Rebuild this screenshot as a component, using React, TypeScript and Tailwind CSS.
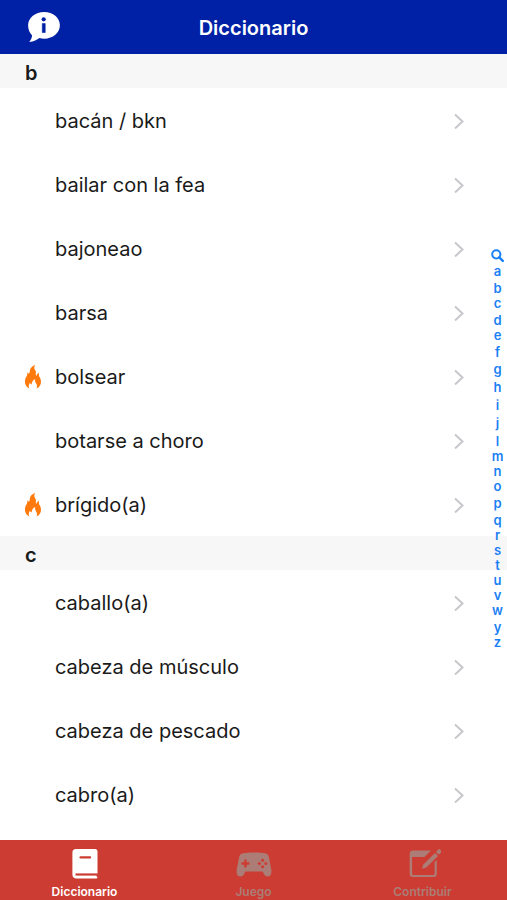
import { useRef, useState } from 'react'
import clsx from 'clsx'

interface Entry {
  word: string
  hot?: boolean
}

interface Section {
  letter: string
  entries: Entry[]
}

const SECTIONS: Section[] = [
  {
    letter: 'b',
    entries: [
      { word: 'bacán / bkn' },
      { word: 'bailar con la fea' },
      { word: 'bajoneao' },
      { word: 'barsa' },
      { word: 'bolsear', hot: true },
      { word: 'botarse a choro' },
      { word: 'brígido(a)', hot: true },
    ],
  },
  {
    letter: 'c',
    entries: [
      { word: 'caballo(a)' },
      { word: 'cabeza de músculo' },
      { word: 'cabeza de pescado' },
      { word: 'cabro(a)' },
    ],
  },
]

const INDEX = 'abcdefghijlmnopqrstuvwyz'.split('')

function slotHeight(letter: string) {
  if ('hijl'.includes(letter)) return 'h-[18px]'
  if ('bdfgpqy'.includes(letter)) return 'h-[17px]'
  return 'h-[15px]'
}

function InfoBubble() {
  return (
    <svg viewBox="0 0 34 32" className="h-8 w-[34px]" aria-hidden="true">
      <path
        d="M17.2 1C26 1 32.900 6.800 32.900 14.300S26 27.700 17.200 27.700c-1.700 0-3.300-.2-4.800-.6-2.300 1.900-5.500 3.500-10.200 3.900 1.700-1.900 2.600-4 2.900-6.500C2.600 22 1.100 18.300 1.100 14.300 1.100 6.800 8.400 1 17.200 1z"
        fill="#fff"
      />
      <circle cx="16.700" cy="8.300" r="2.100" fill="#0021a5" />
      <path d="M15.300 12.600h2.900v8.900h-2.900z" fill="#0021a5" stroke="#0021a5" strokeWidth=".6" strokeLinejoin="round" />
    </svg>
  )
}

function Flame() {
  return (
    <svg viewBox="0 0 18 26" className="h-[26px] w-[18px]" fill="#ff7a0c" aria-hidden="true">
      <path d="M11.300 1C7.600 2.100 5.600 4.600 5.700 8c0 .8-.2 1.300-.8 1.400-.7 0-1-.6-1.800-1.100.5 1.600.3 2.600-.5 4C1.500 14.200.9 15.700.9 17.500c0 3 1.500 5.500 4.300 7-.8-2.400-.5-4.200.8-5.800.4 1 .9 1.500 1.700 1.600.2-2.500 1.200-4.300 3.500-5.300-.4 1.900 0 3.100.9 4.400 1.200 1.700 1.300 3.400.4 5.200 3-1.300 4.500-3.800 4.500-6.900 0-1.900-.6-3.300-1.500-4.800-.8-1.500-.9-2.700-.3-4.200-1.600.5-2.500 1.500-2.600 3.100-.8-.4-1-1.200-.7-2.400.3-1.400-.1-2.300-.9-3.400-1.100-1.500-1-3.200.3-5z" />
    </svg>
  )
}

function Chevron() {
  return (
    <svg viewBox="0 0 10 16" className="h-4 w-[10px]" fill="none" stroke="#c7c7cc" strokeWidth="2" aria-hidden="true">
      <path d="M1 1.500l7.500 7L1 15.500" />
    </svg>
  )
}

function SearchIcon() {
  return (
    <svg viewBox="0 0 13 13" className="size-[13px]" fill="none" stroke="currentColor" aria-hidden="true">
      <circle cx="5.300" cy="5.300" r="4.100" strokeWidth="2" />
      <path d="M8.300 8.300l3.500 3.500" strokeWidth="2.400" strokeLinecap="round" />
    </svg>
  )
}

function BookIcon() {
  return (
    <svg viewBox="0 0 36 32" className="h-8 w-9" aria-hidden="true">
      <path
        d="M9 1h19c1.600 0 2.500.9 2.500 2.500v22l-1 .7v2.300l1 .5c-.2 1-.8 1.500-2 1.500H9.500C7 30.500 5.400 29 5.400 26.500v-22C5.400 2.200 6.600 1 9 1z"
        fill="currentColor"
      />
      <path d="M13.500 9.400h9.600" stroke="#cd3c32" strokeWidth="2.200" strokeLinecap="round" />
      <path d="M30.500 26.500H8.500" stroke="#cd3c32" strokeWidth="2.200" />
    </svg>
  )
}

function GamepadIcon() {
  return (
    <svg viewBox="0 0 36 32" className="h-8 w-9" aria-hidden="true">
      <path
        d="M7 5.200c5.500-1.100 16.500-1.100 22 0 2.400.5 3.300 1.600 3.800 3.900l2.300 11.400c.5 2.500.3 4.500-.2 6-.5 1.300-1.700 1.900-3.400 1.900-1.900 0-2.900-.7-3.600-2.300l-.7-1.600c-.3-.6-.7-.9-1.500-.9H10.300c-.8 0-1.200.3-1.500.9l-.7 1.600c-.7 1.600-1.700 2.300-3.600 2.300-1.700 0-2.900-.6-3.400-1.900-.5-1.500-.7-3.500-.2-6L3.200 9.100C3.700 6.800 4.600 5.700 7 5.200z"
        fill="currentColor"
      />
      <path d="M8.200 11.500h2.400v2.800h2.800v2.400h-2.800v2.800H8.200v-2.800H5.400v-2.400h2.800z" fill="#cd3c32" />
      <g fill="#cd3c32">
        <circle cx="26.600" cy="12.300" r="1.500" />
        <circle cx="26.600" cy="18.700" r="1.500" />
        <circle cx="23.400" cy="15.500" r="1.500" />
        <circle cx="29.800" cy="15.500" r="1.500" />
      </g>
    </svg>
  )
}

function ComposeIcon() {
  return (
    <svg viewBox="0 0 36 32" className="h-8 w-9" aria-hidden="true">
      <path
        d="M26 2.500H8c-2.200 0-3.300 1.200-3.300 3.300v20c0 2.200 1.100 3.300 3.300 3.300h20.500c2.200 0 3.300-1.100 3.300-3.300V12l-2.200 2.200v11c0 1.300-.6 1.900-1.900 1.900H9c-1.300 0-1.900-.6-1.900-1.900V9H19.500z"
        fill="currentColor"
      />
      <path d="M17 20.700l1.400-4.200L30 4.900l3 3L21.300 19.500z" fill="currentColor" />
      <path d="M31 3.900l2.300-2.300c.6-.6 1.200-.6 1.800 0l1 1c.5.500.5 1.100 0 1.700l-2.200 2.500z" fill="currentColor" />
    </svg>
  )
}

const TABS = [
  { id: 'diccionario', label: 'Diccionario', Icon: BookIcon },
  { id: 'juego', label: 'Juego', Icon: GamepadIcon },
  { id: 'contribuir', label: 'Contribuir', Icon: ComposeIcon },
]

export default function App() {
  const [tab, setTab] = useState('diccionario')
  const listRef = useRef<HTMLDivElement>(null)

  const jumpTo = (letter: string) => {
    listRef.current?.querySelector(`[data-letter="${letter}"]`)?.scrollIntoView()
  }

  return (
    <div className="flex h-screen flex-col bg-white font-[Inter,'Liberation_Sans',sans-serif] text-[#1a1a1a]">
      <header className="grid h-[54px] shrink-0 grid-cols-[1fr_auto_1fr] items-center bg-[#0021a5] px-[27px] text-white">
        <button type="button" aria-label="Información" className="w-fit">
          <InfoBubble />
        </button>
        <h1 className="pt-0.5 text-xl font-semibold">Diccionario</h1>
      </header>

      <main className="relative min-h-0 flex-1">
        <div ref={listRef} className="h-full overflow-y-auto [scrollbar-width:none]">
          {SECTIONS.map((section) => (
            <section key={section.letter} data-letter={section.letter}>
              <h2 className="flex h-[34px] items-center bg-[#f7f7f7] px-[25px] pt-1 text-xl font-semibold">
                {section.letter}
              </h2>
              <ul>
                {section.entries.map((entry) => (
                  <li key={entry.word}>
                    <button type="button" className="flex h-16 w-full items-center pt-0.5 pr-[43px] pl-6 text-left">
                      <span className="w-[31px]">{entry.hot && <Flame />}</span>
                      <span className="flex-1 text-xl">{entry.word}</span>
                      <Chevron />
                    </button>
                  </li>
                ))}
              </ul>
            </section>
          ))}
        </div>

        {/* Alphabet index */}
        <nav
          aria-label="Índice"
          className="absolute inset-y-0 right-0 flex w-[19px] flex-col items-center justify-center pt-1 text-[13px] leading-[15px] font-semibold text-[#1a80f5]"
        >
          <button type="button" aria-label="Buscar" className="pb-0.5">
            <SearchIcon />
          </button>
          {INDEX.map((letter) => (
            <button
              key={letter}
              type="button"
              onClick={() => jumpTo(letter)}
              className={clsx('flex items-end', slotHeight(letter))}
            >
              {letter}
            </button>
          ))}
        </nav>
      </main>

      <nav className="grid h-[60px] shrink-0 grid-cols-3 bg-[#cd3c32]">
        {TABS.map(({ id, label, Icon }) => (
          <button
            key={id}
            type="button"
            onClick={() => setTab(id)}
            className={clsx(
              'flex flex-col items-center justify-end gap-1 text-xs font-semibold',
              tab === id ? 'text-white' : 'text-[#ab7d76]'
            )}
          >
            <Icon />
            <span>{label}</span>
          </button>
        ))}
      </nav>
    </div>
  )
}
